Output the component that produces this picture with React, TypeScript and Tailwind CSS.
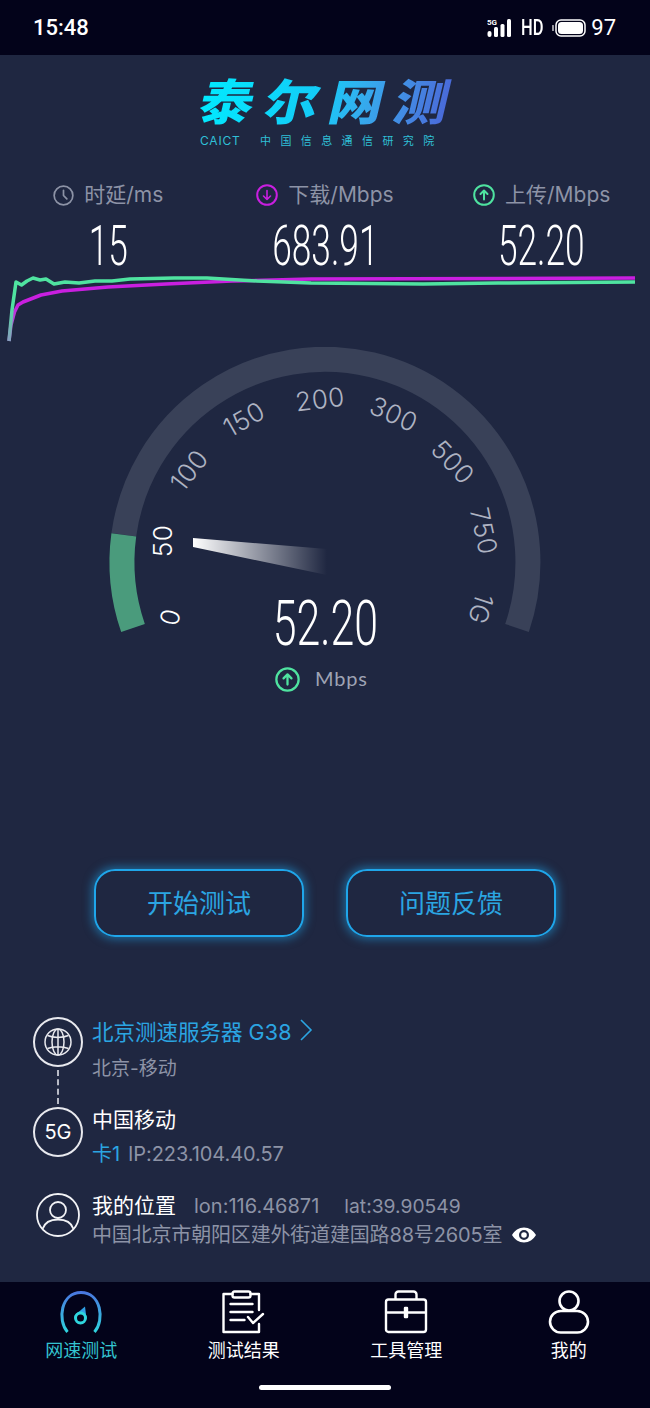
const gaugeLabels = [
  { text: "0", x: 170, y: 270, rotate: -76, white: true },
  { text: "50", x: 162, y: 194, rotate: -90, white: true },
  { text: "100", x: 189, y: 123, rotate: -52 },
  { text: "150", x: 244, y: 72, rotate: -30 },
  { text: "200", x: 320, y: 52, rotate: -7 },
  { text: "300", x: 394, y: 67, rotate: 25 },
  { text: "500", x: 453, y: 115, rotate: 47 },
  { text: "750", x: 484, y: 184, rotate: 78 },
  { text: "1G", x: 481, y: 262, rotate: 108 },
];

function ArrowCircle({ color, down, size = 22 }: { color: string; down?: boolean; size?: number }) {
  return (
    <svg width={size} height={size} viewBox="0 0 22 22" fill="none" stroke={color} strokeWidth="2" strokeLinecap="round" strokeLinejoin="round">
      <circle cx="11" cy="11" r="9.8" />
      {down ? <path d="M11 6.5v9M7.5 12l3.5 3.5 3.5-3.5" strokeWidth="1.6" /> : <path d="M11 15.5v-9M7.5 10l3.5-3.5 3.5 3.5" />}
    </svg>
  );
}

function StatusBar() {
  return (
    <div className="h-[55px] bg-[#03031a] flex items-center justify-between pl-[33px] pr-[34px] text-white">
      <span className="text-[22px] font-medium font-['Roboto',sans-serif]">15:48</span>
      <div className="flex items-center">
        <svg width="25" height="20" viewBox="0 0 25 20" fill="#fff">
          <text x="0" y="7" fontSize="8" fontWeight="700" fontFamily="Roboto, sans-serif">5G</text>
          <rect x="0.5" y="13" width="4" height="6" rx="2" />
          <rect x="7" y="9" width="4" height="10" rx="1.5" />
          <rect x="13.5" y="6" width="4" height="13" rx="1.5" />
          <rect x="20" y="1" width="4" height="18" rx="1.5" />
        </svg>
        <span className="ml-[6px] text-[22px] font-medium font-['Roboto',sans-serif] scale-x-[0.75] w-[24px]">HD</span>
        <svg className="ml-[10px]" width="34" height="20" viewBox="0 0 34 20" fill="none">
          <path d="M1 7.5v5" stroke="#fff" strokeWidth="1.2" strokeLinecap="round" />
          <rect x="4" y="2" width="29" height="16" rx="5" stroke="#fff" strokeWidth="1.5" />
          <rect x="6" y="4" width="25" height="12" rx="3.5" fill="#fff" />
        </svg>
        <span className="ml-[5px] text-[22px] font-['Roboto',sans-serif]">97</span>
      </div>
    </div>
  );
}

function Logo() {
  return (
    <div className="flex flex-col items-center pt-[20px]">
      <div className="w-[262px] h-[56px] leading-[56px] whitespace-nowrap text-[54px] font-black -skew-x-12 scale-y-[0.9] tracking-[11px] pl-[6px] bg-gradient-to-r from-[#00ecff] via-[#14c8f6] to-[#4a63d6] bg-clip-text text-transparent">
        泰尔网测
      </div>
      <div className="w-[250px] flex items-center text-[#2fc0d8] text-[11px] leading-[14px] mt-[3px]">
        <span className="w-[60px] tracking-[0.8px] text-[12px]">CAICT</span>
        <span className="tracking-[9.4px] whitespace-nowrap">中国信息通信研究院</span>
      </div>
    </div>
  );
}

function Stats() {
  return (
    <div className="grid grid-cols-3 mt-[32px] text-[#8d93a6]">
      <div className="flex flex-col items-center">
        <div className="h-[30px] flex items-center gap-[10px] text-[21px] whitespace-nowrap">
          <svg width="21" height="21" viewBox="0 0 22 22" fill="none" stroke="#8d93a6" strokeWidth="1.8" strokeLinecap="round" strokeLinejoin="round">
            <circle cx="11" cy="11" r="9.8" />
            <path d="M11 5.5V11l3.5 3.5" />
          </svg>
          时延/ms
        </div>
      </div>
      <div className="flex flex-col items-center">
        <div className="h-[30px] flex items-center gap-[10px] text-[21px] whitespace-nowrap">
          <ArrowCircle color="#c91fe0" down />
          下载/Mbps
        </div>
      </div>
      <div className="flex flex-col items-center">
        <div className="h-[30px] flex items-center gap-[10px] text-[21px] whitespace-nowrap">
          <ArrowCircle color="#4fe3a0" />
          上传/Mbps
        </div>
      </div>
      {["15", "683.91", "52.20"].map((value) => (
        <div key={value} className="h-[52px] mt-[10px] flex items-center justify-center text-white text-[56px] leading-[52px] font-light font-['Roboto',sans-serif] scale-x-[0.63]">
          {value}
        </div>
      ))}
    </div>
  );
}

function SpeedChart() {
  return (
    <svg className="block w-full h-[75px]" viewBox="0 272 650 75" fill="none" strokeWidth="3.5" strokeLinejoin="round">
      <defs>
        <linearGradient id="fadeDown" x1="0" y1="280" x2="0" y2="342" gradientUnits="userSpaceOnUse">
          <stop offset="0.4" stopColor="#c91fe0" />
          <stop offset="1" stopColor="#8a86c0" />
        </linearGradient>
        <linearGradient id="fadeUp" x1="0" y1="280" x2="0" y2="342" gradientUnits="userSpaceOnUse">
          <stop offset="0.4" stopColor="#4fe3a0" />
          <stop offset="1" stopColor="#8a9cc0" />
        </linearGradient>
      </defs>
      <path stroke="url(#fadeDown)" d="M9 341 L11 325 L14.5 312 L18 305 L23 302 L41 295 L62 291 L108 287 L166 284 L232 281 L311 279 L635 278" />
      <path stroke="url(#fadeUp)" d="M9 341 L12 310 L16 282 L21.5 285 L27 281 L33 278 L40 280 L46 279 L54 284 L65 282 L79 283 L95 281 L112 281 L130 279 L174 278 L207 278 L257 281 L311 283 L423 284 L498 283 L635 282" />
    </svg>
  );
}

function Gauge() {
  return (
    <div className="relative h-[522px]">
      <svg className="block w-full h-[300px]" viewBox="0 0 650 300" fill="none">
        <defs>
          <linearGradient id="needle" x1="193" y1="0" x2="327" y2="0" gradientUnits="userSpaceOnUse">
            <stop offset="0" stopColor="#ffffff" />
            <stop offset="1" stopColor="#ffffff" stopOpacity="0" />
          </linearGradient>
        </defs>
        <path d="M123.8 187.8 A203 203 0 1 1 517 281" stroke="#394158" strokeWidth="25" />
        <path d="M133 281 A203 203 0 0 1 123.8 187.8" stroke="#4a9b7c" strokeWidth="25" />
        <polygon points="193,191 193,200 327,228 327,202" fill="url(#needle)" />
        {gaugeLabels.map((label) => (
          <text
            key={label.text}
            x={label.x}
            y={label.y}
            transform={`rotate(${label.rotate} ${label.x} ${label.y})`}
            textAnchor="middle"
            dominantBaseline="central"
            fontSize="26"
            fontWeight="300"
            letterSpacing="0.5"
            fontFamily="Inter, sans-serif"
            fill={label.white ? "#ffffff" : "#aeb3c2"}
          >
            {label.text}
          </text>
        ))}
      </svg>
      <div className="absolute left-0 right-0 top-[247px] flex flex-col items-center">
        <div className="h-[60px] flex items-center text-white text-[63px] font-light font-['Roboto',sans-serif] scale-x-[0.68]">52.20</div>
        <div className="mt-[12px] h-[26px] w-[100px] flex items-center gap-[15px] text-[20px] text-[#9ea3b4] font-['Lato',sans-serif] tracking-[0.8px]">
          <ArrowCircle color="#4fe3a0" size={25} />
          <span className="mb-[3px]">Mbps</span>
        </div>
      </div>
    </div>
  );
}

function Buttons() {
  return (
    <div className="flex justify-center gap-[42px]">
      {["开始测试", "问题反馈"].map((label) => (
        <button
          key={label}
          className="w-[210px] h-[68px] rounded-[21px] border-[2.5px] border-[#1fa6ea] text-[#2ba5e2] text-[26px] shadow-[0_0_10px_2px_rgba(31,160,228,0.55)]"
        >
          {label}
        </button>
      ))}
    </div>
  );
}

function IconRing({ children }: { children: React.ReactNode }) {
  return <div className="w-[50px] h-[50px] shrink-0 rounded-full border-2 border-[#e8e9ee] flex items-center justify-center text-white">{children}</div>;
}

function InfoList() {
  return (
    <div className="mt-[80px] pl-[33px] text-[#8d93a6]">
      <div className="h-[50px] flex gap-[9px]">
        <IconRing>
          <svg width="30" height="30" viewBox="0 0 30 30" fill="none" stroke="#e8e9ee" strokeWidth="1.5">
            <circle cx="15" cy="15" r="13" />
            <ellipse cx="15" cy="15" rx="6" ry="13" />
            <path d="M4.5 8.500c6 2.500 15 2.500 21 0M4.500 21.500c6-2.500 15-2.500 21 0M15 2v26" />
          </svg>
        </IconRing>
        <div className="flex flex-col">
          <div className="h-[30px] flex items-center text-[21.5px] text-[#2ba5e2] whitespace-nowrap">
            <span>北京测速服务器</span>
            <span className="ml-[6px] tracking-[0.2px]">G38</span>
            <svg className="ml-[7px] mb-[4px]" width="14" height="24" viewBox="0 0 14 24" fill="none" stroke="#2ba5e2" strokeWidth="1.6">
              <path d="M2 2l10 10L2 22" />
            </svg>
          </div>
          <div className="h-[24px] mt-[10px] flex items-center text-[19px]">北京-移动</div>
        </div>
      </div>
      <div className="ml-[24px] my-[3px] h-[34px] w-0 border-l-2 border-dashed border-[#b8bbc6]" />
      <div className="flex gap-[9px]">
        <IconRing>
          <span className="text-[20px]">5G</span>
        </IconRing>
        <div className="flex flex-col">
          <div className="h-[26px] flex items-center text-[21px] text-white">中国移动</div>
          <div className="h-[26px] mt-[8px] flex items-center text-[20px] tracking-[-0.07px] whitespace-nowrap">
            <span className="text-[#2ba5e2] mr-[8px]">卡1</span>IP:223.104.40.57
          </div>
        </div>
      </div>
      <div className="flex mt-[26px]">
        <div className="w-[44px] h-[44px] ml-[3px] mr-[12px] shrink-0">
          <svg width="44" height="44" viewBox="0 0 44 44" fill="none" stroke="#f2f3f6" strokeWidth="1.8">
            <circle cx="22" cy="22" r="21" />
            <circle cx="22" cy="17" r="8" />
            <path d="M6.5 36c2-6 8-9.5 15.5-9.5S35.500 30 37.500 36" />
          </svg>
        </div>
        <div className="flex flex-col">
          <div className="h-[26px] flex items-center text-[20px] whitespace-nowrap">
            <span className="text-white text-[21px] mr-[18px]">我的位置</span>
            <span className="mr-[25px]">lon:116.46871</span>
            <span className="text-[19.3px]">lat:39.90549</span>
          </div>
          <div className="h-[26px] mt-[3px] flex items-center text-[20px] tracking-[-0.17px] whitespace-nowrap">
            中国北京市朝阳区建外街道建国路88号2605室
            <svg className="ml-[10px]" width="24" height="16" viewBox="0 0 24 16">
              <path fill="#fff" fillRule="evenodd" d="M12 0.500C17 0.500 21.500 3.500 24 8c-2.500 4.500-7 7.500-12 7.500S2.500 12.500 0 8C2.500 3.500 7 0.500 12 0.500zM12 3a5 5 0 1 0 0 10 5 5 0 0 0 0-10zM12 5.200a2.800 2.800 0 1 1 0 5.600 2.800 2.800 0 0 1 0-5.600z" />
            </svg>
          </div>
        </div>
      </div>
    </div>
  );
}

function BottomNav() {
  return (
    <div className="absolute left-0 right-0 bottom-0 h-[126px] bg-[#03031a]">
      <div className="grid grid-cols-4 pt-[8px]">
        <div className="flex flex-col items-center">
          <svg width="44" height="44" viewBox="0 0 44 44" fill="none" strokeWidth="3">
            <defs>
              <linearGradient id="tabArc" x1="0" y1="1" x2="0" y2="43" gradientUnits="userSpaceOnUse">
                <stop offset="0" stopColor="#4a74e0" />
                <stop offset="1" stopColor="#2fd6de" />
              </linearGradient>
            </defs>
            <path stroke="url(#tabArc)" d="M8.500 42C-2 30 2 2.500 22 2.500S46 30 35.500 42" />
            <path fill="#2f9fe6" d="M26 16.500L15.500 25.500 27.500 28.500z" />
            <circle cx="21.500" cy="28" r="5" stroke="#2fd6de" fill="#03031a" />
          </svg>
          <span className="mt-[5px] text-[18px] leading-[24px] text-[#33c4d0]">网速测试</span>
        </div>
        <div className="flex flex-col items-center">
          <svg width="44" height="44" viewBox="0 0 44 44" fill="none" stroke="#fff" strokeWidth="2.4" strokeLinejoin="round" strokeLinecap="round">
            <path d="M10.500 4H1.500v38H37v-8M28.500 4H37v16" />
            <rect x="10.500" y="1.500" width="18" height="6" rx="2" />
            <path d="M8.500 14h22M8.500 22h22M8.500 30h14M26 27l5 6 10-9" />
          </svg>
          <span className="mt-[5px] text-[18px] leading-[24px] text-white">测试结果</span>
        </div>
        <div className="flex flex-col items-center">
          <svg width="44" height="44" viewBox="0 0 44 44" fill="none" stroke="#fff" strokeWidth="2.4" strokeLinejoin="round">
            <rect x="2" y="9.500" width="40" height="32.500" rx="2.500" />
            <path d="M11.500 9.500V4.500a3 3 0 0 1 3-3h15a3 3 0 0 1 3 3v5M2 22.500h40" />
            <rect x="21" y="18" width="2" height="9" fill="#fff" />
          </svg>
          <span className="mt-[5px] text-[18px] leading-[24px] text-white">工具管理</span>
        </div>
        <div className="flex flex-col items-center">
          <svg width="44" height="44" viewBox="0 0 44 44" fill="none" stroke="#fff" strokeWidth="2.6">
            <circle cx="22" cy="11" r="9.500" />
            <rect x="3" y="21" width="38" height="21.500" rx="10.750" />
          </svg>
          <span className="mt-[5px] text-[18px] leading-[24px] text-white">我的</span>
        </div>
      </div>
      <div className="w-[132px] h-[5px] mx-auto mt-[22px] rounded-full bg-white" />
    </div>
  );
}

export default function App() {
  return (
    <div className="relative w-[650px] h-[1408px] overflow-hidden bg-[#1f2741] font-['Inter','Noto_Sans_CJK_SC',sans-serif]">
      <StatusBar />
      <Logo />
      <Stats />
      <SpeedChart />
      <Gauge />
      <Buttons />
      <InfoList />
      <BottomNav />
    </div>
  );
}
